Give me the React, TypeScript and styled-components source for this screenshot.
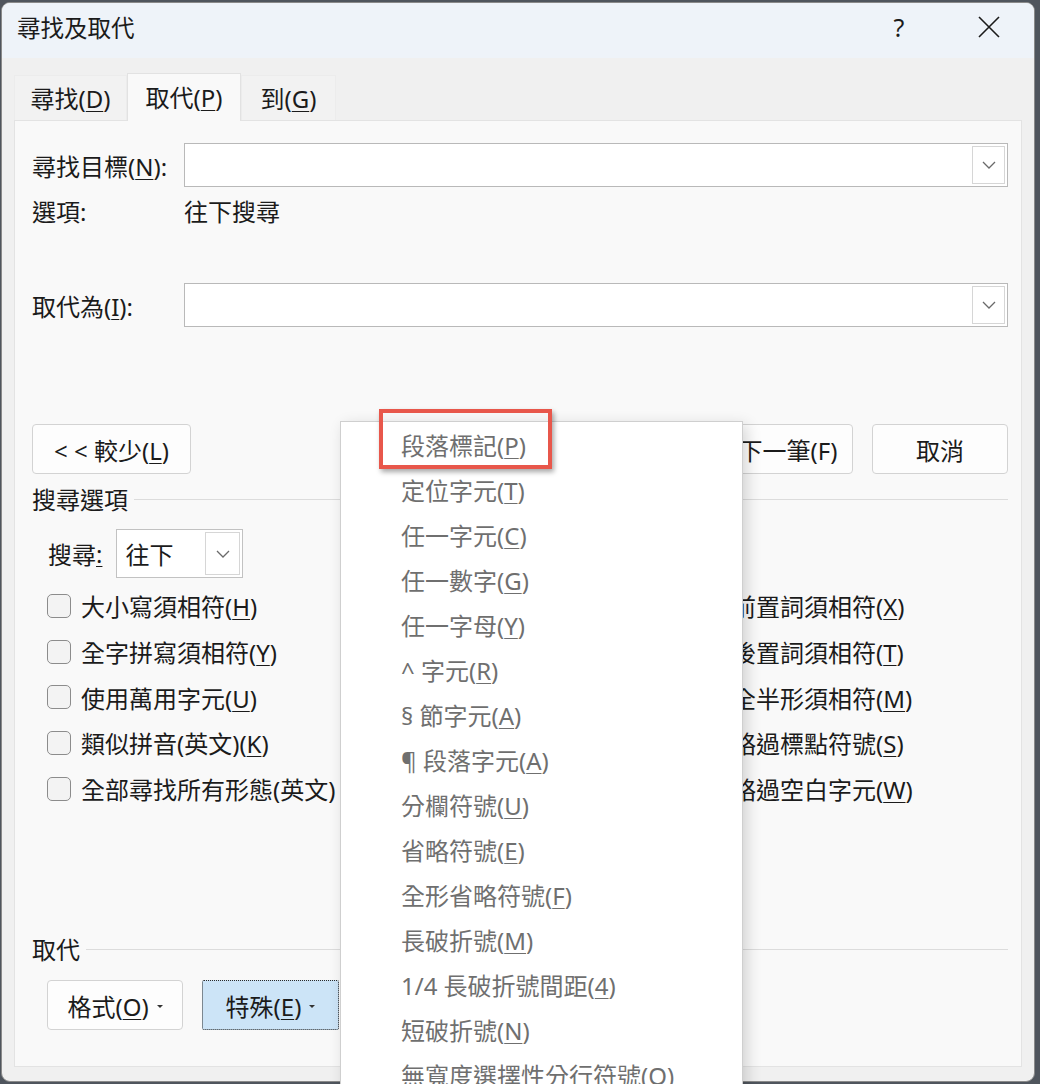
import React from 'react';
import styled, { createGlobalStyle } from 'styled-components';

const GlobalStyle = createGlobalStyle`
  html, body {
    margin: 0;
    padding: 0;
    background: #4f555d;
  }
  body {
    font-family: "Noto Sans", "Noto Sans CJK TC", sans-serif;
    font-size: 24px;
    color: #1b1b1b;
  }
  u {
    text-decoration-thickness: 1px;
    text-underline-offset: 3px;
  }
`

const Page = styled.div`
  position: relative;
  width: 1040px;
  height: 1084px;
  overflow: hidden;
`

const Window = styled.div`
  margin: 2px 0 0 1px;
  width: 1034px;
  height: 1080px;
  box-sizing: border-box;
  border: 1px solid #8a8a8a;
  border-radius: 9px;
  background: #f0f0f0;
  display: flex;
  flex-direction: column;
  overflow: hidden;
`

const TitleBar = styled.div`
  height: 55px;
  background: #eef3f9;
  display: flex;
  align-items: center;
  padding: 0 0 0 15px;
  font-size: 23.5px;
`

const Title = styled.div`
  flex: 1;
  margin-top: -8px;
`

const TitleButton = styled.div`
  width: 90px;
  height: 55px;
  display: flex;
  align-items: center;
  justify-content: center;
  font-size: 25px;
  margin-top: -8px;
`

const Body = styled.div`
  flex: 1;
  padding: 0 12px 14px 12px;
  display: flex;
  flex-direction: column;
`

const TabRow = styled.div`
  height: 62px;
  display: flex;
  align-items: flex-end;
`

const Tab = styled.div<{ $active?: boolean; $w: number }>`
  width: ${(p) => p.$w}px;
  height: ${(p) => (p.$active ? '48px' : '45px')};
  box-sizing: border-box;
  display: flex;
  align-items: center;
  justify-content: center;
  background: ${(p) => (p.$active ? '#f9f9f9' : '#f2f2f2')};
  border: 1px solid ${(p) => (p.$active ? '#e2e2e2' : '#ececec')};
  border-bottom: none;
  margin-bottom: ${(p) => (p.$active ? '-1px' : '0')};
  position: relative;
  z-index: ${(p) => (p.$active ? 1 : 0)};
  padding-bottom: 2px;
`

const Panel = styled.div`
  flex: 1;
  background: #f9f9f9;
  border: 1px solid #e3e3e3;
  padding: 22px 13px 0 17px;
  display: flex;
  flex-direction: column;
`

const FieldRow = styled.div<{ $mt?: number }>`
  display: flex;
  align-items: center;
  height: 44px;
  margin-top: ${(p) => p.$mt ?? 0}px;
`

const FieldLabel = styled.div`
  width: 152px;
  white-space: nowrap;
`

const Combo = styled.div`
  flex: 1;
  height: 44px;
  box-sizing: border-box;
  border: 1px solid #b9b9b9;
  background: #fff;
  display: flex;
  justify-content: flex-end;
  padding: 2px;
`

const ComboButton = styled.div<{ $w?: number }>`
  width: ${(p) => p.$w ?? 33}px;
  height: 100%;
  box-sizing: border-box;
  border: 1px solid #d6d6d6;
  display: flex;
  align-items: center;
  justify-content: center;
`

const OptionRow = styled.div`
  display: flex;
  align-items: center;
  height: 30px;
  margin-top: 8px;
`

const ButtonRow = styled.div`
  display: flex;
  justify-content: space-between;
  margin-top: 97px;
`

const ButtonGroup = styled.div`
  display: flex;
  gap: 19px;
`

const Button = styled.div<{ $w: number; $focus?: boolean }>`
  width: ${(p) => p.$w}px;
  height: 50px;
  box-sizing: border-box;
  border: 1px ${(p) => (p.$focus ? 'dotted #2a2a2a' : 'solid #d3d3d3')};
  border-radius: ${(p) => (p.$focus ? '2px' : '4px')};
  background: ${(p) => (p.$focus ? '#cce4f7' : '#fdfdfd')};
  display: flex;
  align-items: center;
  justify-content: center;
  gap: 8px;
  white-space: nowrap;
`

const Caret = styled.span`
  width: 0;
  height: 0;
  border-left: 3px solid transparent;
  border-right: 3px solid transparent;
  border-top: 3px solid #333;
  margin-top: 2px;
`

const GroupHeader = styled.div<{ $mt: number }>`
  display: flex;
  align-items: center;
  gap: 6px;
  height: 28px;
  margin-top: ${(p) => p.$mt}px;

  &::after {
    content: '';
    flex: 1;
    height: 1px;
    background: #dcdcdc;
    margin-top: 2px;
  }
`

const SearchRow = styled.div`
  display: flex;
  align-items: center;
  margin: 17px 0 0 16px;
  height: 49px;
`

const Select = styled.div`
  width: 127px;
  height: 49px;
  box-sizing: border-box;
  margin-left: 14px;
  border: 1px solid #c2c2c2;
  background: #fff;
  display: flex;
  align-items: center;
  padding: 2px 2px 2px 8px;
`

const SelectText = styled.div`
  flex: 1;
`

const CheckGrid = styled.div`
  display: grid;
  grid-template-columns: 651px 1fr;
  grid-auto-rows: 45.7px;
  margin: 5px 0 0 15px;
`

const CheckItem = styled.label`
  display: flex;
  align-items: center;
  gap: 10px;
  white-space: nowrap;
`

const Box = styled.span`
  width: 24px;
  height: 24px;
  box-sizing: border-box;
  border: 1.5px solid #8c8c8c;
  border-radius: 5px;
  background: #f3f3f3;
`

const FormatRow = styled.div`
  display: flex;
  gap: 19px;
  margin: 18px 0 0 15px;
`

const Menu = styled.div`
  position: absolute;
  left: 340px;
  top: 421px;
  width: 403px;
  height: 700px;
  box-sizing: border-box;
  background: #fff;
  border: 1px solid #cfcfcf;
  box-shadow: 4px 4px 14px rgba(0, 0, 0, 0.16);
`

const MenuItem = styled.div`
  height: 45px;
  display: flex;
  align-items: center;
  padding-left: 60px;
  color: #6f6f6f;
  white-space: nowrap;

  u {
    text-decoration-color: #6f6f6f;
  }
`

const Highlight = styled.div`
  position: absolute;
  left: 38px;
  top: -13px;
  width: 173px;
  height: 60px;
  box-sizing: border-box;
  border: 4px solid #e8574b;
  box-shadow: 2px 3px 5px rgba(0, 0, 0, 0.35);
`

function Chevron() {
  return (
    <svg width="14" height="8" viewBox="0 0 14 8" fill="none">
      <path d="M1 1 L7 7 L13 1" stroke="#6a6a6a" strokeWidth="1.3" />
    </svg>
  );
}

function CloseIcon() {
  return (
    <svg width="22" height="22" viewBox="0 0 22 22">
      <path d="M1 1 L21 21 M21 1 L1 21" stroke="#1b1b1b" strokeWidth="1.6" />
    </svg>
  );
}

const leftChecks = [
  ['大小寫須相符(', 'H', ')'],
  ['全字拼寫須相符(', 'Y', ')'],
  ['使用萬用字元(', 'U', ')'],
  ['類似拼音(英文)(', 'K', ')'],
  ['全部尋找所有形態(英文)', '', ''],
];

const rightChecks = [
  ['前置詞須相符(', 'X', ')'],
  ['後置詞須相符(', 'T', ')'],
  ['全半形須相符(', 'M', ')'],
  ['略過標點符號(', 'S', ')'],
  ['略過空白字元(', 'W', ')'],
];

const menuItems = [
  ['段落標記(', 'P', ')'],
  ['定位字元(', 'T', ')'],
  ['任一字元(', 'C', ')'],
  ['任一數字(', 'G', ')'],
  ['任一字母(', 'Y', ')'],
  ['^ 字元(', 'R', ')'],
  ['§ 節字元(', 'A', ')'],
  ['¶ 段落字元(', 'A', ')'],
  ['分欄符號(', 'U', ')'],
  ['省略符號(', 'E', ')'],
  ['全形省略符號(', 'F', ')'],
  ['長破折號(', 'M', ')'],
  ['1/4 長破折號間距(', '4', ')'],
  ['短破折號(', 'N', ')'],
  ['無寬度選擇性分行符號(', 'O', ')'],
];

function Key({ t }: { t: string[] }) {
  return (
    <span>
      {t[0]}
      {t[1] && <u>{t[1]}</u>}
      {t[2]}
    </span>
  );
}

export default function App() {
  const rows = leftChecks.map((l, i) => [l, rightChecks[i]]);

  return (
    <Page>
      <GlobalStyle />
      <Window>
        <TitleBar>
          <Title>尋找及取代</Title>
          <TitleButton>?</TitleButton>
          <TitleButton>
            <CloseIcon />
          </TitleButton>
        </TitleBar>
        <Body>
          <TabRow>
            <Tab $w={113}>
              <Key t={['尋找(', 'D', ')']} />
            </Tab>
            <Tab $w={114} $active>
              <Key t={['取代(', 'P', ')']} />
            </Tab>
            <Tab $w={95}>
              <Key t={['到(', 'G', ')']} />
            </Tab>
          </TabRow>
          <Panel>
            <FieldRow>
              <FieldLabel>
                <Key t={['尋找目標(', 'N', '):']} />
              </FieldLabel>
              <Combo>
                <ComboButton>
                  <Chevron />
                </ComboButton>
              </Combo>
            </FieldRow>
            <OptionRow>
              <FieldLabel>選項:</FieldLabel>
              <div>往下搜尋</div>
            </OptionRow>
            <FieldRow $mt={58}>
              <FieldLabel>
                <Key t={['取代為(', 'I', '):']} />
              </FieldLabel>
              <Combo>
                <ComboButton>
                  <Chevron />
                </ComboButton>
              </Combo>
            </FieldRow>

            <ButtonRow>
              <Button $w={159}>
                <Key t={['< < 較少(', 'L', ')']} />
              </Button>
              <ButtonGroup>
                <Button $w={178}>尋找下一筆(F)</Button>
                <Button $w={136}>取消</Button>
              </ButtonGroup>
            </ButtonRow>

            <GroupHeader $mt={10}>搜尋選項</GroupHeader>
            <SearchRow>
              搜尋<u>:</u>
              <Select>
                <SelectText>往下</SelectText>
                <ComboButton $w={35}>
                  <Chevron />
                </ComboButton>
              </Select>
            </SearchRow>
            <CheckGrid>
              {rows.map(([l, r], i) => (
                <React.Fragment key={i}>
                  <CheckItem>
                    <Box />
                    <Key t={l} />
                  </CheckItem>
                  <CheckItem>
                    <Box />
                    <Key t={r} />
                  </CheckItem>
                </React.Fragment>
              ))}
            </CheckGrid>

            <GroupHeader $mt={123}>取代</GroupHeader>
            <FormatRow>
              <Button $w={136}>
                <Key t={['格式(', 'O', ')']} />
                <Caret />
              </Button>
              <Button $w={137} $focus>
                <Key t={['特殊(', 'E', ')']} />
                <Caret />
              </Button>
            </FormatRow>
          </Panel>
        </Body>
      </Window>

      <Menu>
        {menuItems.map((m, i) => (
          <MenuItem key={i}>
            <Key t={m} />
          </MenuItem>
        ))}
        <Highlight />
      </Menu>
    </Page>
  );
}
